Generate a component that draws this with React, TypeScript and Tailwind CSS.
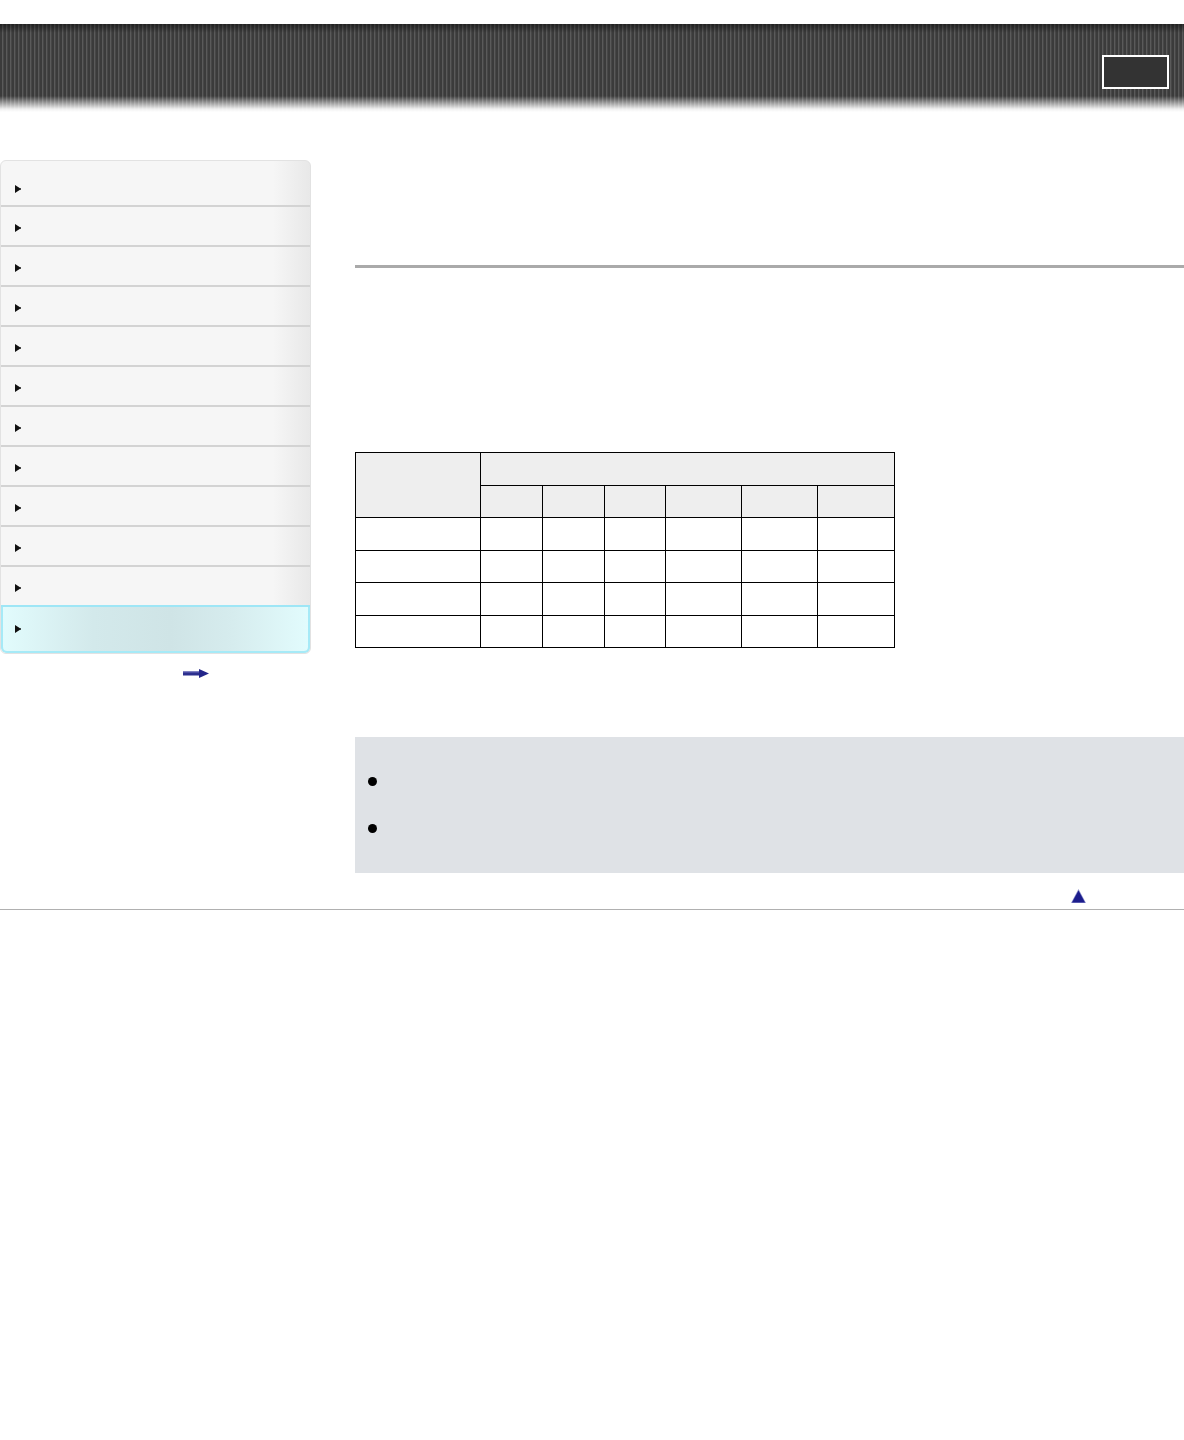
export default function App() {
  const rows = Array.from({ length: 10 })
  const cols = ["w-[125px]", "w-[62px]", "w-[62px]", "w-[62px]", "w-[76px]", "w-[76px]", "w-[77px]"]

  return (
    <div className="w-[1184px] min-h-[1440px] bg-white font-['Liberation_Sans',sans-serif] text-[13px] text-black">
      <div className="h-6"></div>

      {/* header bar */}
      <div className="h-[88px] flex justify-end items-start pt-[31px] pr-[15px] bg-[linear-gradient(to_bottom,rgba(0,0,0,0.45)_0px,rgba(0,0,0,0)_9px,rgba(0,0,0,0)_72px,rgba(255,255,255,0.5)_79px,rgba(255,255,255,0.92)_85px,#ffffff_88px),repeating-linear-gradient(90deg,#3b3b3b_0px,#3b3b3b_2px,#5a5a5a_2px,#5a5a5a_3px,#474747_3px,#474747_4px)]">
        <div className="w-[67px] h-[34px] border-2 border-white bg-[#333333]"></div>
      </div>

      <div className="mt-12 flex items-start">
        {/* side menu */}
        <div className="w-[311px] shrink-0">
          <div className="rounded-[6px] border border-[#e2e2e2] overflow-hidden bg-[linear-gradient(to_right,#f6f6f6_88%,#e8e8e8)]">
            <div className="h-[44px] pl-[14px] pt-[24px]">
              <Arrow />
            </div>
            {rows.map((_, i) => (
              <div key={i} className="h-[40px] border-t-2 border-[#d3d3d3] pl-[14px] pt-[17px]">
                <Arrow />
              </div>
            ))}
            <div className="h-[48px] border-t-2 border-[#9ee6f6] pl-[14px] pt-[18px] rounded-b-[6px] bg-[linear-gradient(to_right,#e2fcfd_0%,#d3e9eb_30%,#cfe4e6_55%,#d6ecee_75%,#e2fcfd_100%)] shadow-[inset_0_-2px_0_#a6eaf7,inset_2px_0_0_#a6eaf7,inset_-2px_0_0_#a6eaf7]">
              <Arrow />
            </div>
          </div>
          <div className="flex justify-start pl-[183px] mt-[15px]">
            <svg width="26" height="9" viewBox="0 0 26 9">
              <rect x="0" y="2.5" width="17" height="4" fill="#2c2f8e" />
              <rect x="0" y="2.5" width="17" height="1" fill="#6a6dbb" />
              <path d="M16 0 L26 4.5 L16 9 Z" fill="#23268a" />
            </svg>
          </div>
        </div>

        {/* main column */}
        <div className="ml-[44px] flex-1">
          <div className="mt-[105px] h-[3px] bg-[#aaaaaa]"></div>

          <table className="mt-[184px] border-collapse w-[540px]">
            <colgroup>
              {cols.map((c, i) => (
                <col key={i} className={c} />
              ))}
            </colgroup>
            <thead>
              <tr className="h-[33px] bg-[#eeeeee]">
                <th rowSpan={2} className="border border-black"></th>
                <th colSpan={6} className="border border-black"></th>
              </tr>
              <tr className="h-[32px] bg-[#eeeeee]">
                {cols.slice(1).map((_, i) => (
                  <th key={i} className="border border-black"></th>
                ))}
              </tr>
            </thead>
            <tbody>
              {[33, 32, 33, 32].map((h, r) => (
                <tr key={r} className={h === 33 ? "h-[33px]" : "h-[32px]"}>
                  {cols.map((_, i) => (
                    <td key={i} className="border border-black"></td>
                  ))}
                </tr>
              ))}
            </tbody>
          </table>

          {/* note box */}
          <div className="mt-[89px] h-[136px] bg-[#dfe2e6] pl-[13px] pt-[40px] flex flex-col gap-[38px]">
            <div className="flex items-center h-[9px]">
              <span className="w-[9px] h-[9px] rounded-full bg-black"></span>
            </div>
            <div className="flex items-center h-[9px]">
              <span className="w-[9px] h-[9px] rounded-full bg-black"></span>
            </div>
          </div>

          <div className="mt-[16px] flex justify-end pr-[98px]">
            <svg width="15" height="14" viewBox="0 0 15 14">
              <path d="M7.5 0 L15 14 L0 14 Z" fill="#8f93cf" />
              <path d="M7.5 1.5 L14 13.5 L1 13.5 Z" fill="#1c1d8c" />
            </svg>
          </div>
        </div>
      </div>

      <div className="mt-[6px] h-px bg-[#b0b0b0]"></div>
    </div>
  )
}

function Arrow() {
  return (
    <svg width="6" height="8" viewBox="0 0 6 8" className="block">
      <path d="M0 0 L5 3.2 L6 3.2 L6 4.8 L5 4.8 L0 8 Z" fill="#111111" />
    </svg>
  )
}
